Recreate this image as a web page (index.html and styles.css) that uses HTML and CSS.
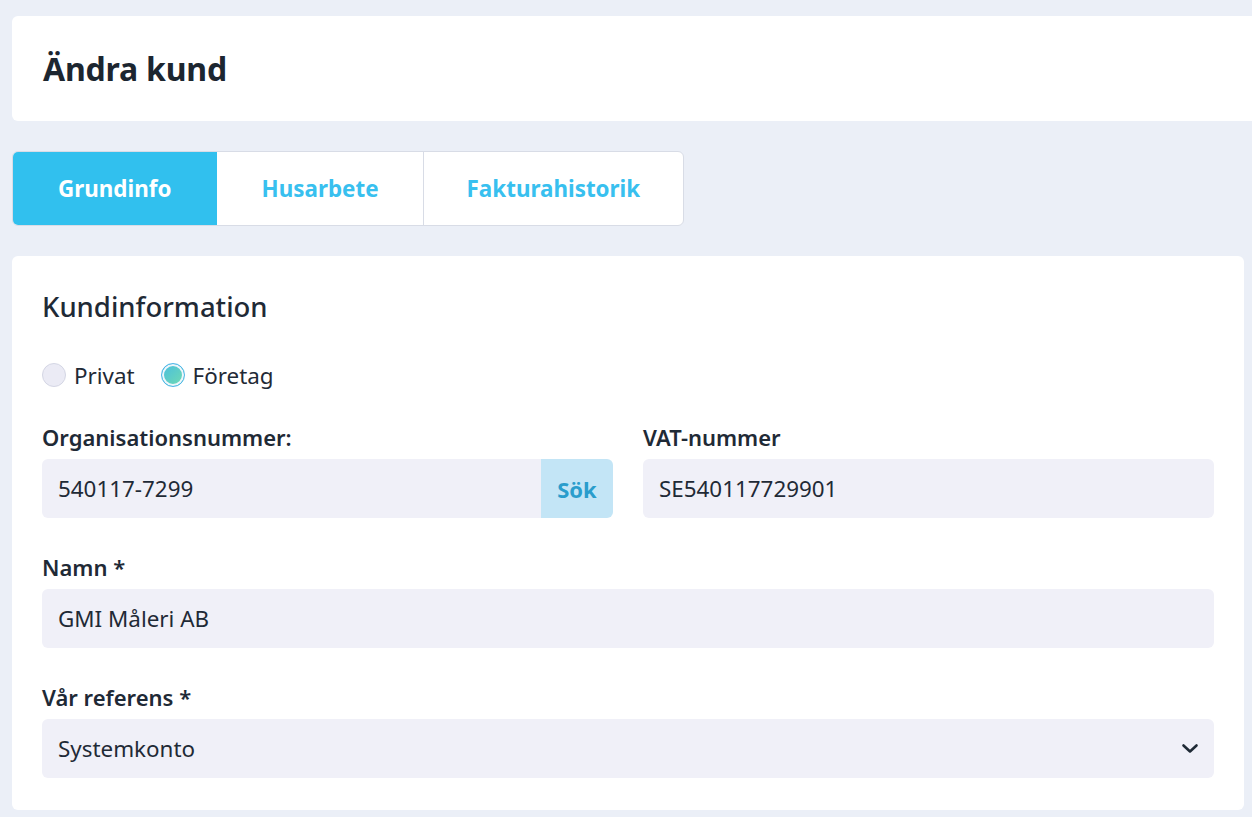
FILE: index.html
```html
<!DOCTYPE html>
<html lang="sv">
<head>
    <meta charset="UTF-8">
    <meta name="viewport" content="width=device-width, initial-scale=1.0">
    <title>Ändra kund</title>
    <link rel="stylesheet" href="styles.css">
</head>
<body>
    <div class="page-header">
        <h1>Ändra kund</h1>
    </div>

    <div class="tabs">
        <a class="tab active" href="#">Grundinfo</a>
        <a class="tab" href="#">Husarbete</a>
        <a class="tab tab-wide" href="#">Fakturahistorik</a>
    </div>

    <div class="card">
        <h2>Kundinformation</h2>

        <div class="radio-row">
            <label class="radio"><span class="radio-dot"></span>Privat</label>
            <label class="radio checked"><span class="radio-dot"></span>Företag</label>
        </div>

        <div class="form-row two-col">
            <div class="form-group">
                <label class="field-label">Organisationsnummer:</label>
                <div class="input-group">
                    <div class="input">540117-7299</div>
                    <button class="btn-search">Sök</button>
                </div>
            </div>
            <div class="form-group">
                <label class="field-label">VAT-nummer</label>
                <div class="input">SE540117729901</div>
            </div>
        </div>

        <div class="form-row">
            <div class="form-group">
                <label class="field-label">Namn *</label>
                <div class="input">GMI Måleri AB</div>
            </div>
        </div>

        <div class="form-row">
            <div class="form-group">
                <label class="field-label">Vår referens *</label>
                <div class="input select">
                    <span>Systemkonto</span>
                    <svg class="chevron" width="18" height="11" viewBox="0 0 18 11"><path d="M2.5 2.5 L9 8.5 L15.5 2.5" fill="none" stroke="#1f2a36" stroke-width="2.6" stroke-linecap="round" stroke-linejoin="round"/></svg>
                </div>
            </div>
        </div>
    </div>
</body>
</html>
```

FILE: styles.css
```css
html, body {
    overflow: hidden;
}

body {
    margin: 0;
    padding: 16px 8px 0 12px;
    background-color: #ebeff7;
    font-family: "Noto Sans", "Open Sans", sans-serif;
    color: #1f2a36;
}

.page-header {
    background-color: white;
    border-radius: 6px;
    height: 105px;
    margin-right: -40px;
    padding: 0 31px;
    display: flex;
    align-items: center;
}

h1 {
    margin: 0;
    font-size: 32px;
    font-weight: 700;
    color: #1c2630;
    letter-spacing: -0.2px;
}

.tabs {
    display: flex;
    margin-top: 30px;
    width: 672px;
    height: 75px;
    background-color: white;
    border: 1px solid #d8dce6;
    border-radius: 6px;
    box-sizing: border-box;
    overflow: hidden;
}

.tab {
    width: 206px;
    display: flex;
    align-items: center;
    justify-content: center;
    text-decoration: none;
    font-size: 22.4px;
    font-weight: 700;
    color: #38c0ef;
    border-right: 1px solid #d8dce6;
}

.tab.active {
    background-color: #31c0ee;
    color: white;
    margin: -1px 0 -1px -1px;
    border-right: none;
}

.tab-wide {
    width: 260px;
    border-right: none;
}

.card {
    margin-top: 30px;
    background-color: white;
    border-radius: 6px;
    padding: 30px 30px 32px;
}

h2 {
    margin: 0;
    font-size: 27.5px;
    font-weight: 500;
    line-height: 42px;
}

.radio-row {
    display: flex;
    gap: 26px;
    margin-top: 30px;
    height: 34px;
    align-items: center;
}

.radio {
    display: flex;
    align-items: center;
    gap: 8px;
    font-size: 22.4px;
}

.radio-dot {
    width: 24px;
    height: 24px;
    border-radius: 50%;
    background-color: #ebebf5;
    border: 1px solid #d4d6e4;
    box-sizing: border-box;
}

.radio.checked .radio-dot {
    border: 1.5px solid #4db6ea;
    background: linear-gradient(135deg, #48bde0, #72dcb0);
    box-shadow: inset 0 0 0 2px #eef6fb;
}

.form-row {
    margin-top: 30px;
}

.form-row + .form-row {
    margin-top: 34px;
}

.two-col {
    display: grid;
    grid-template-columns: 1fr 1fr;
    gap: 30px;
}

.field-label {
    display: block;
    font-size: 22px;
    font-weight: 600;
    line-height: 31px;
    margin-bottom: 6px;
}

.input {
    height: 59px;
    background-color: #f0f0f8;
    border-radius: 6px;
    padding: 0 16px;
    display: flex;
    align-items: center;
    font-size: 22.4px;
    box-sizing: border-box;
    color: #1f2a36;
}

.input-group {
    display: flex;
}

.input-group .input {
    flex: 1;
    border-radius: 6px 0 0 6px;
}

.btn-search {
    width: 72px;
    height: 59px;
    border: none;
    border-radius: 0 6px 6px 0;
    background-color: #c3e5f6;
    color: #2a9dcc;
    font-family: inherit;
    font-size: 22px;
    font-weight: 700;
    cursor: pointer;
}

.select {
    justify-content: space-between;
    padding-right: 15px;
}
```
